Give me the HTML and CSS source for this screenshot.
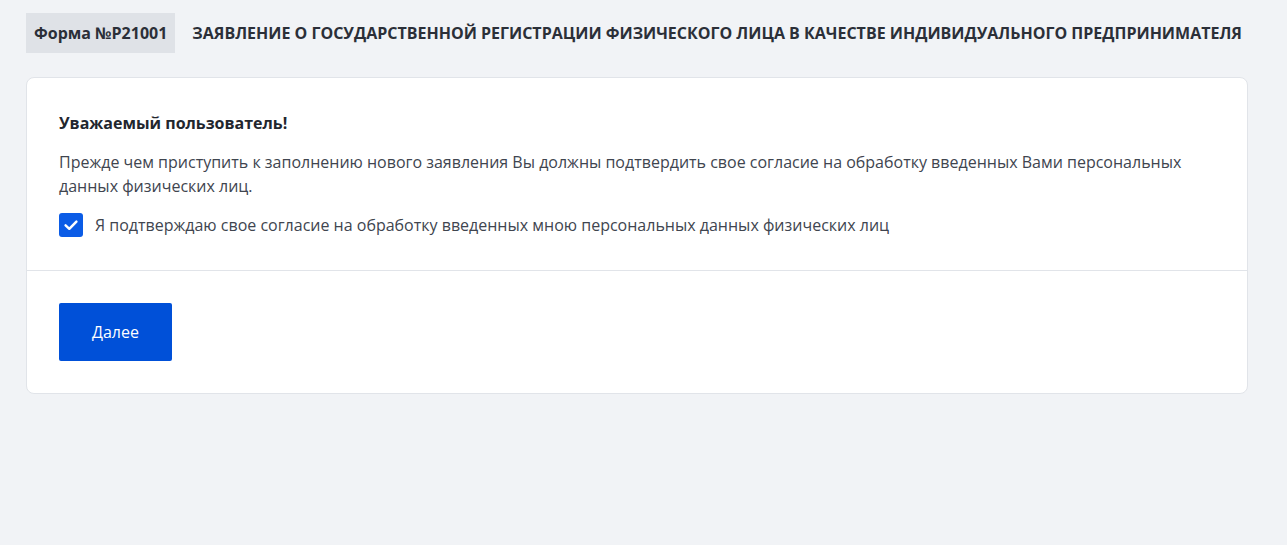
FILE: index.html
```html
<!DOCTYPE html>
<html lang="ru">
<head>
<meta charset="utf-8">
<title>Форма №P21001</title>
<link rel="stylesheet" href="styles.css">
</head>
<body>
<div class="page">
  <header class="head">
    <span class="badge">Форма №P21001</span>
    <h1 class="title">ЗАЯВЛЕНИЕ О ГОСУДАРСТВЕННОЙ РЕГИСТРАЦИИ ФИЗИЧЕСКОГО ЛИЦА В КАЧЕСТВЕ ИНДИВИДУАЛЬНОГО ПРЕДПРИНИМАТЕЛЯ</h1>
  </header>
  <section class="card">
    <div class="card-body">
      <h2 class="greet">Уважаемый пользователь!</h2>
      <p class="text">Прежде чем приступить к заполнению нового заявления Вы должны подтвердить свое согласие на обработку введенных Вами персональных данных физических лиц.</p>
      <label class="check">
        <span class="box"><svg width="16" height="16" viewBox="0 0 16 16"><path d="M2.6 8.4 L6.3 11.8 L13.4 4.6" fill="none" stroke="#fff" stroke-width="2.5" stroke-linecap="round" stroke-linejoin="round"/></svg></span>
        <span class="check-label">Я подтверждаю свое согласие на обработку введенных мною персональных данных физических лиц</span>
      </label>
    </div>
    <div class="card-foot">
      <button class="btn">Далее</button>
    </div>
  </section>
</div>
</body>
</html>
```
FILE: styles.css
```css
* { box-sizing: border-box; }
html, body { margin: 0; padding: 0; }
body {
  background: #f1f3f6;
  font-family: "Open Sans", "Noto Sans", sans-serif;
  color: #2b2f38;
}
.page {
  padding: 13px 39px 0 26px;
}
.head {
  display: flex;
  align-items: center;
  gap: 17px;
  height: 40px;
}
.badge {
  display: flex;
  align-items: center;
  height: 40px;
  padding: 0 8px;
  background: #dfe2e7;
  font-weight: 700;
  font-size: 16px;
  color: #2b2f38;
  white-space: nowrap;
}
.title {
  margin: 0;
  font-size: 16px;
  font-weight: 700;
  color: #2b2f38;
  white-space: nowrap;
}
.card {
  margin-top: 24px;
  background: #fff;
  border: 1px solid #e1e4e9;
  border-radius: 8px;
}
.card-body {
  padding: 33px 32px 33px 32px;
  border-bottom: 1px solid #e1e4e9;
}
.greet {
  margin: 0;
  font-size: 16px;
  line-height: 24px;
  font-weight: 700;
  color: #22262e;
}
.text {
  margin: 15px 0 0;
  font-size: 16px;
  line-height: 24px;
  color: #40454f;
}
.check {
  margin-top: 15px;
  display: flex;
  align-items: center;
  gap: 12px;
}
.box {
  width: 24px;
  height: 24px;
  border-radius: 3px;
  background: #0b5ce6;
  display: flex;
  align-items: center;
  justify-content: center;
}
.check-label {
  font-size: 16px;
  line-height: 24px;
  color: #40454f;
}
.card-foot {
  padding: 32px 32px 32px;
}
.btn {
  display: block;
  width: 113px;
  height: 58px;
  border: 0;
  border-radius: 2px;
  background: #0050d8;
  color: #fff;
  font-family: inherit;
  font-size: 16px;
  font-weight: 500;
}
```
